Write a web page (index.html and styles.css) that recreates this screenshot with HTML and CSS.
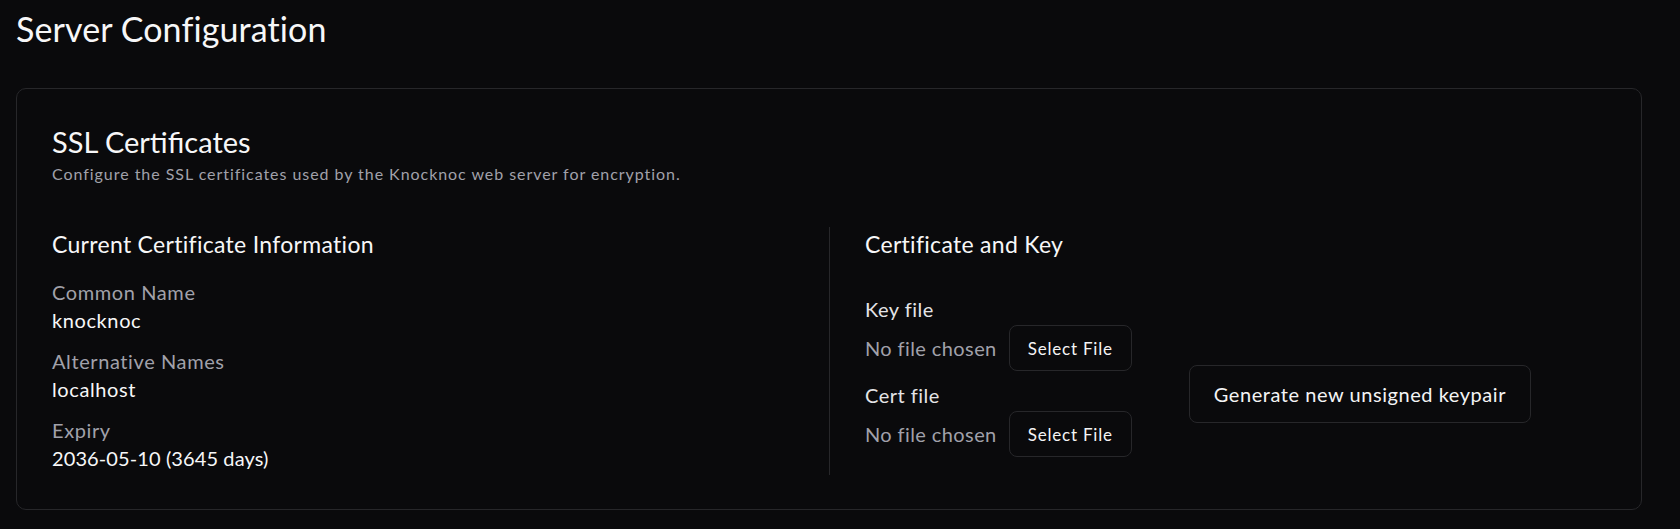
FILE: index.html
```html
<!DOCTYPE html>
<html lang="en">
<head>
<meta charset="utf-8">
<title>Server Configuration</title>
<link rel="stylesheet" href="styles.css">
</head>
<body>
<main class="page">
  <h1 class="page-title">Server Configuration</h1>
  <section class="card">
    <header class="card-header">
      <h2 class="card-title">SSL Certificates</h2>
      <p class="card-desc">Configure the SSL certificates used by the Knocknoc web server for encryption.</p>
    </header>
    <div class="card-body">
      <div class="col col-info">
        <h3 class="col-title">Current Certificate Information</h3>
        <dl class="info">
          <div class="info-item">
            <dt>Common Name</dt>
            <dd>knocknoc</dd>
          </div>
          <div class="info-item">
            <dt>Alternative Names</dt>
            <dd>localhost</dd>
          </div>
          <div class="info-item">
            <dt>Expiry</dt>
            <dd class="num">2036-05-10 (3645 days)</dd>
          </div>
        </dl>
      </div>
      <div class="col col-files">
        <h3 class="col-title">Certificate and Key</h3>
        <div class="files-row">
          <div class="fields">
            <div class="field">
              <label class="field-label">Key file</label>
              <div class="file-input">
                <span class="file-name">No file chosen</span>
                <button class="btn btn-file" type="button">Select File</button>
              </div>
            </div>
            <div class="field">
              <label class="field-label">Cert file</label>
              <div class="file-input">
                <span class="file-name">No file chosen</span>
                <button class="btn btn-file" type="button">Select File</button>
              </div>
            </div>
          </div>
          <button class="btn btn-generate" type="button">Generate new unsigned keypair</button>
        </div>
      </div>
    </div>
  </section>
</main>
</body>
</html>
```
FILE: styles.css
```css
* { box-sizing: border-box; }

html, body {
  margin: 0;
  padding: 0;
  background: #0a0a0c;
  color: #f4f4f5;
  font-family: "Lato", "Noto Sans", sans-serif;
}

.page {
  padding: 9px 38px 20px 16px;
}

.page-title {
  margin: 0;
  font-size: 34px;
  line-height: 40px;
  font-weight: 400;
  letter-spacing: 0.1px;
  color: #f7f7f8;
}

.card {
  margin-top: 39px;
  border: 1px solid #27272a;
  border-radius: 10px;
  background: #0a0a0c;
  padding: 37px 35px 34px 35px;
}

.card-title {
  margin: 0;
  font-size: 29px;
  line-height: 32px;
  font-weight: 400;
  color: #f7f7f8;
}

.card-desc {
  margin: 6px 0 0;
  font-size: 16px;
  line-height: 20px;
  letter-spacing: 0.95px;
  color: #a1a1aa;
}

.card-body {
  margin-top: 43px;
  display: grid;
  grid-template-columns: 1fr 1fr;
}

.col-files {
  border-left: 1px solid #27272a;
  padding-left: 35px;
}

.col-title {
  margin: 3px 0 0;
  font-size: 23px;
  line-height: 28px;
  font-weight: 400;
  letter-spacing: 0.3px;
  color: #f7f7f8;
}

.info {
  margin: 20px 0 3px;
  display: flex;
  flex-direction: column;
  gap: 13px;
}

.info-item dt,
.info-item dd {
  margin: 0;
  font-size: 20px;
  line-height: 28px;
  letter-spacing: 0.6px;
}

.info-item dt { color: #a1a1aa; }
.info-item dd { color: #f7f7f8; }
.info-item dd.num { letter-spacing: 0.1px; }

.files-row {
  display: flex;
  align-items: flex-start;
  gap: 57px;
  margin-top: 37px;
}

.fields {
  display: flex;
  flex-direction: column;
  gap: 10px;
}

.field-label {
  display: block;
  font-size: 20px;
  line-height: 28px;
  letter-spacing: 0.5px;
  color: #e4e4e7;
}

.file-input {
  display: flex;
  align-items: center;
  gap: 12px;
  margin-top: 2px;
}

.file-name {
  font-size: 20px;
  line-height: 28px;
  letter-spacing: 0.4px;
  color: #a1a1aa;
}

.btn {
  font-family: inherit;
  background: #0a0a0c;
  color: #f4f4f5;
  border: 1px solid #27272a;
  border-radius: 8px;
  cursor: pointer;
}

.btn-file {
  height: 46px;
  padding: 0 18px;
  font-size: 17px;
  letter-spacing: 0.8px;
}

.btn-generate {
  margin-top: 70px;
  height: 58px;
  padding: 0 24px;
  font-size: 20px;
  letter-spacing: 0.55px;
}
```
